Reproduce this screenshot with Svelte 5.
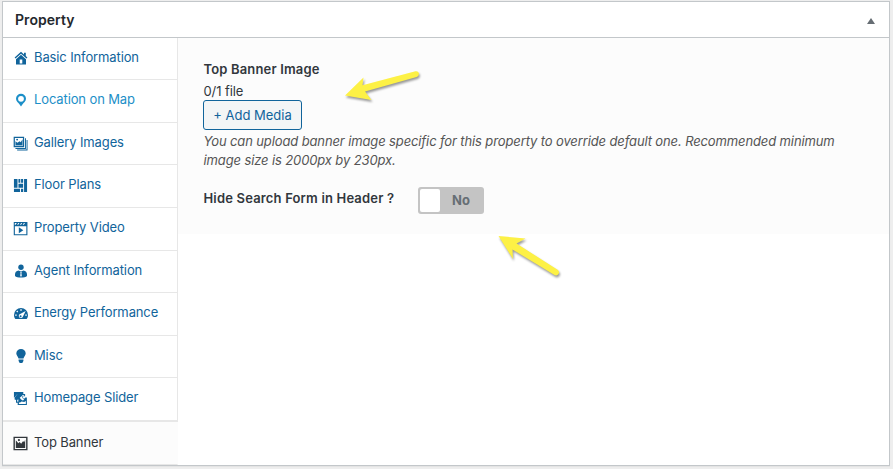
<script>
  const tabs = [
    { label: 'Basic Information', icon: 'home' },
    { label: 'Location on Map', icon: 'pin', hover: true },
    { label: 'Gallery Images', icon: 'gallery' },
    { label: 'Floor Plans', icon: 'plans' },
    { label: 'Property Video', icon: 'video' },
    { label: 'Agent Information', icon: 'agent' },
    { label: 'Energy Performance', icon: 'gauge' },
    { label: 'Misc', icon: 'bulb' },
    { label: 'Homepage Slider', icon: 'slider' },
    { label: 'Top Banner', icon: 'banner', active: true }
  ];
</script>

{#snippet glyph(name)}
  <svg class="icon" viewBox="0 0 16 16" fill="currentColor" aria-hidden="true">
    {#if name === 'home'}
      <path d="M8 1.800 11 4.400V2.800h1.800V6L14.400 7.600l-.9 1L8 3.700 2.500 8.600l-.9-1z" />
      <path fill-rule="evenodd" d="M8 4.800 13 9.200V14.500H3V9.200zM6.700 9.600V13.500h2.600V9.600z" />
    {:else if name === 'pin'}
      <path fill-rule="evenodd" d="M8 1.800a5 5 0 0 1 5 5c0 2.600-2.400 4-3.800 5.900L8 14.500l-1.200-1.800C5.400 10.800 3 9.400 3 6.800a5 5 0 0 1 5-5zM8 3.900a2.900 2.900 0 1 0 0 5.800A2.900 2.900 0 0 0 8 3.900z" />
    {:else if name === 'gallery'}
      <path fill-rule="evenodd" d="M.7.7h11.200v11.200H.7zM2 2v8.500h8.600V2z" />
      <path d="M2.600 9.800V5.700l2.100 1.400L7 5.600l1.200 1 2-3.200v6.400z" />
      <circle cx="4.400" cy="3.800" r="1" />
      <path d="M12.800 2.500h1v11.300H2.600v-1.100h10.200zM14.500 4.300h1v11.200H4.400v-1h10.100z" />
    {:else if name === 'plans'}
      <path d="M1 1h3.800v9.500H1zM5.800 1h2v4h-2zM8.600 1h2.200v4H8.600zM5.800 6h5v4.500h-5zM11.800 1H15v14h-3.200zM1 11.500h6.500V15H1zM8.500 11.500h2.400V15H8.500z" />
    {:else if name === 'video'}
      <path fill-rule="evenodd" d="M.8 1h14.600v14.200H.8zM2 5.600V14h12.200V5.600zM2 2.100l-.2 1.800h1L4 2.100zm3.600 0L4.400 3.900h1.200l1.200-1.800zm3 0L7.400 3.900h1.200l1.200-1.800zm3 0-1.200 1.800h1.200l1.200-1.800z" />
      <path d="M6.200 6.600 11 9.800l-4.800 3.300z" />
    {:else if name === 'agent'}
      <circle cx="8" cy="4.200" r="2.700" />
      <path fill-rule="evenodd" d="M5.500 7.600 8 8.600l2.500-1c2.200.4 3.500 1.800 3.500 4v1.300c-1 1-3.300 1.700-6 1.700s-5-.7-6-1.700v-1.300c0-2.200 1.300-3.600 3.500-4zM7 8.800l.6 1.200-.4 3 .8.8.8-.8-.4-3L9 8.800l-1 .5z" />
    {:else if name === 'gauge'}
      <path fill-rule="evenodd" d="M8 3a7 7 0 0 1 7 7c0 1.700-.5 3-1.400 4H2.400C1.500 13 1 11.700 1 10a7 7 0 0 1 7-7zM7.300 4.300v1.500h1.400V4.300zM4.200 5.600l-.9.9 1 1 .9-.9zM2.200 9.400v1.300h1.500V9.400zM12.300 9.400v1.300h1.500V9.400zM12.700 6.100 7.600 8.700a2.200 2.200 0 1 0 2.500 2.600zM7.600 10.200a1 1 0 1 1 0 2 1 1 0 0 1 0-2z" />
    {:else if name === 'bulb'}
      <path d="M8 .9a4.700 4.700 0 0 1 4.700 4.700c0 2-1.900 3-2.200 5h-5c-.3-2-2.200-3-2.200-5A4.700 4.700 0 0 1 8 .9zM5.600 11.400h4.800v1.700L9.300 15H6.700l-1.100-1.900z" />
    {:else if name === 'slider'}
      <path d="M1 1h10v2.500H4.500L1 7.500z" />
      <path d="M2.200 6.500 4.700 3.200h8.200v2.300l-3 .2 1.700 2.700 1.600-1.600h1.600V15H5v-2.500H3.200V9.700L1.500 8.700z" />
      <path fill="#fff" d="M6.300 12.300v1.600h7.400v-3.200l-1.800 1.100-2.800-.5-1.500 1zM7.200 7.200 9.500 5.400l.8 2.200 1.700 1.600-1.600.8-2-1.200zM4.500 9.600l1.100-.8.2 2.500-1.300.2zM9.700 4.200h2.200v.9H9.700z" />
    {:else}
      <path fill-rule="evenodd" d="M.5.700h15v14.600H.5zM2 2.200v11.600h12V2.200z" />
      <path d="M3 12.800V4.500l2.700 3.300L7 6.500l1.700 1.700 2.100-2.800 1 1.300L13 4v8.800z" />
      <circle cx="6.300" cy="4.300" r="1.200" />
    {/if}
  </svg>
{/snippet}

<main>
  <section class="panel">
    <header>
      <h2>Property</h2>
      <svg class="toggle" width="8" height="6" viewBox="0 0 8 6"><path d="M4 0 8 6H0z" fill="#666d73" /></svg>
    </header>
    <div class="body">
      <nav>
        {#each tabs as tab}
          <a class={['tab', tab.icon, { hover: tab.hover, active: tab.active }]}>
            {@render glyph(tab.icon)}<span>{tab.label}</span>
          </a>
        {/each}
      </nav>
      <div class="content">
        <div class="fields">
          <h3>Top Banner Image</h3>
          <div class="status">0/1 file</div>
          <button class="add">+ Add Media</button>
          <p>You can upload banner image specific for this property to override default one. Recommended minimum<br />image size is 2000px by 230px.</p>
          <div class="switch-row">
            <span class="question">Hide Search Form in Header ?</span>
            <button class="switch"><i></i><b>No</b></button>
          </div>
        </div>
      </div>
    </div>
  </section>
  <svg class="arrows" viewBox="0 0 893 469" aria-hidden="true">
    <path d="M345 95.500 363.500 77.500 362.500 85.300 415.500 71.200Q418.500 70.800 419 73.500 419 76 416.500 77L365 91.500 371.500 100z" />
    <path d="M498.500 236 525.500 238.500 516.500 243.500 558 270Q559.800 272 558.500 274 557 276.200 554.500 275L512.500 249.500 513 259z" />
  </svg>
</main>

<style>
  :global(body) { margin: 0; background: #eee; }
  main {
    position: relative;
    box-sizing: border-box;
    width: 893px;
    height: 469px;
    padding: 1px 0 0 2px;
    overflow: hidden;
    background: #eee;
    font-family: Inter, sans-serif;
    font-size: 13px;
    color: #32373c;
  }
  .panel {
    box-sizing: border-box;
    display: flex;
    flex-direction: column;
    width: 888px;
    height: 465px;
    border: 1px solid #c3c7ca;
    background: #fff;
    box-shadow: 0 1px 1px rgba(0, 0, 0, .04);
  }
  header {
    box-sizing: border-box;
    height: 36px;
    display: flex;
    align-items: center;
    justify-content: space-between;
    padding: 0 14px 0 12px;
    border-bottom: 1px solid #c3c7ca;
  }
  h2 { margin: 0; font-size: 14px; line-height: 20px; font-weight: 600; color: #23282d; letter-spacing: .06px; }
  .toggle { margin-top: 2px; }
  .body { flex: 1; display: flex; min-height: 0; }
  nav { width: 175px; display: flex; flex-direction: column; flex: none; }
  .tab {
    box-sizing: border-box;
    display: flex;
    height: 43px;
    flex: none;
    padding: 10px 0 0 10px;
    gap: 5px;
    border-right: 1px solid #e7e7e7;
    border-bottom: 1px solid #e7e7e7;
    color: #11649b;
    line-height: 18px;
    white-space: nowrap;
    letter-spacing: -.12px;
  }
  .tab.home, .tab.gallery, .tab.agent, .tab.bulb { height: 42px; }
  .tab.slider { height: 44px; border-bottom-width: 2px; }
  .tab.hover { color: #1c8fc8; }
  .tab.active { background: #fcfcfc; border-right-color: #fcfcfc; color: #32373c; padding-top: 11px; }
  .icon { width: 16px; height: 16px; margin-top: 2px; flex: none; }
  .gallery .icon, .plans .icon, .video .icon, .slider .icon, .banner .icon { width: 15px; height: 15px; margin: 3px 1px 0 0; }
  .content { flex: 1; }
  .fields { box-sizing: border-box; height: 196px; padding: 21px 25.500px 0; background: #fcfcfc; }
  h3 { margin: 0; font-size: 13px; line-height: 20px; font-weight: 600; letter-spacing: .16px; }
  .status { margin-top: 3px; line-height: 19px; letter-spacing: -.1px; }
  .add {
    display: block;
    width: 99px;
    height: 30px;
    margin: -1px 0 0 -.5px;
    padding: 0;
    border: 1px solid #11649b;
    border-radius: 3px;
    background: #f3f5f6;
    color: #11649b;
    font: 13px Inter, sans-serif;
  }
  p { margin: 2px 0 0; font-style: italic; line-height: 19px; color: #555; white-space: nowrap; letter-spacing: -.12px; }
  .switch-row { display: flex; align-items: flex-start; padding-top: 17px; }
  .question { width: 214.500px; line-height: 23px; font-weight: 600; white-space: nowrap; letter-spacing: .17px; }
  .switch {
    display: flex;
    box-sizing: border-box;
    width: 66px;
    height: 27px;
    padding: 2px;
    border: 0;
    border-radius: 3px;
    background: #c4c4c4;
    font: 13px Inter, sans-serif;
  }
  .switch i { width: 20px; height: 23px; border-radius: 2px; background: #fff; }
  .switch b { flex: 1; text-align: center; line-height: 23px; font-weight: 700; color: #666e75; }
  .arrows { position: absolute; inset: 0; width: 893px; height: 469px; pointer-events: none; fill: #fdf145; filter: drop-shadow(1px 2px 1px rgba(0, 0, 0, .4)); }
</style>
